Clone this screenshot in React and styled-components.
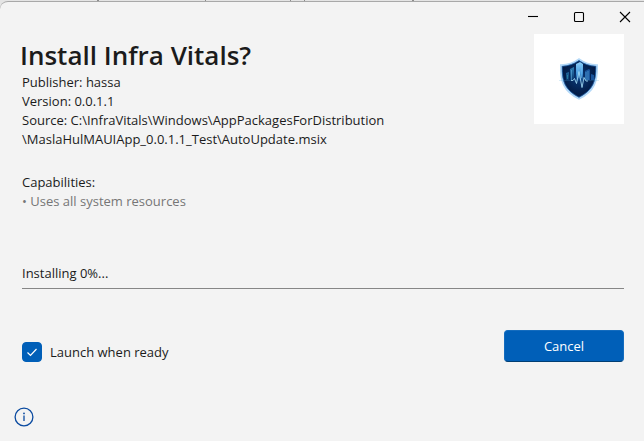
import React from 'react';
import styled, { createGlobalStyle } from 'styled-components';

const COLORS = {
  window: '#f3f3f3',
  frame: '#a8a8a8',
  backdrop: '#e4e4e4',
  backdropEdge: '#8c8c8c',
  text: '#1b1b1b',
  muted: '#767676',
  track: '#868686',
  accent: '#005fb8',
  accentDark: '#003e73',
  info: '#0a4aa0',
};

const App = () => {
  return (
    <>
      <GlobalStyle />
      <Backdrop>
        <Window>
          <TitleBar>
            <CaptionButton aria-label="Minimize">
              <CaptionIcon viewBox="0 0 12 12">
                <path d="M1 5.5h10" />
              </CaptionIcon>
            </CaptionButton>
            <CaptionButton aria-label="Maximize">
              <CaptionIcon viewBox="0 0 12 12">
                <rect x="1.5" y="1.5" width="9" height="9" rx="1" />
              </CaptionIcon>
            </CaptionButton>
            <CaptionButton aria-label="Close">
              <CaptionIcon viewBox="0 0 12 12">
                <path d="M1 1l10 10M11 1L1 11" />
              </CaptionIcon>
            </CaptionButton>
          </TitleBar>

          <Header>
            <Summary>
              <Title>Install Infra Vitals?</Title>
              <Line>Publisher: hassa</Line>
              <Line>Version: 0.0.1.1</Line>
              <Line>
                Source: C:\InfraVitals\Windows\AppPackagesForDistribution
                <wbr />
                \MaslaHulMAUIApp_0.0.1.1_Test\AutoUpdate.msix
              </Line>
            </Summary>
            <LogoTile>
              <ShieldLogo />
            </LogoTile>
          </Header>

          <Capabilities>
            <Line>Capabilities:</Line>
            <Line $muted>• Uses all system resources</Line>
          </Capabilities>

          <Progress>
            <Line id="status">Installing 0%...</Line>
            <Track role="progressbar" aria-labelledby="status" aria-valuenow={0} />
          </Progress>

          <Actions>
            <CheckLabel>
              <Checkbox type="checkbox" defaultChecked />
              <CheckMark viewBox="0 0 20 20">
                <path d="M5.5 10.5l3 3 6-6.500" />
              </CheckMark>
              Launch when ready
            </CheckLabel>
            <CancelButton>Cancel</CancelButton>
          </Actions>

          <Footer>
            <InfoButton aria-label="About this installer">
              <svg width="20" height="20" viewBox="0 0 20 20" fill="none">
                <circle cx="10" cy="10" r="8.9" stroke="currentColor" strokeWidth="1.3" />
                <circle cx="10" cy="6.4" r="0.9" fill="currentColor" />
                <path d="M10 8.600v5.400" stroke="currentColor" strokeWidth="1.3" />
              </svg>
            </InfoButton>
          </Footer>
        </Window>
      </Backdrop>
    </>
  );
};

const ShieldLogo = () => (
  <svg width="40" height="42" viewBox="0 0 40 42" fill="none">
    <defs>
      <radialGradient id="shield" cx="0.5" cy="0.45" r="0.6">
        <stop offset="0" stopColor="#0b3c7c" />
        <stop offset="0.6" stopColor="#04214f" />
        <stop offset="1" stopColor="#02143a" />
      </radialGradient>
      <linearGradient id="tower" x1="0" y1="0" x2="0" y2="1">
        <stop offset="0" stopColor="#8ed0fb" />
        <stop offset="0.6" stopColor="#4596db" />
        <stop offset="1" stopColor="#0a3b7a" />
      </linearGradient>
      <linearGradient id="side" x1="0" y1="0" x2="0" y2="1">
        <stop offset="0" stopColor="#2f7fb6" />
        <stop offset="1" stopColor="#0b3a70" />
      </linearGradient>
    </defs>
    <path
      d="M20 1.200C15 4.800 9 6.900 2 7.300C1.600 23 4.500 33 20 40.600C35.500 33 38.400 23 38 7.300C31 6.900 25 4.800 20 1.200Z"
      fill="url(#shield)"
      stroke="#b4d9f8"
      strokeWidth="2"
    />
    <path
      d="M20 2.600C15 6 9.400 7.900 3.200 8.300C3 23 5.800 32 20 39.200C34.200 32 37 23 36.800 8.300C30.600 7.900 25 6 20 2.600Z"
      stroke="#2568b2"
      strokeWidth="0.8"
    />
    <path d="M7 15l3-1v8H7zM11 11l4-2v13h-4z" fill="url(#side)" />
    <path d="M17 6l4-2 3 2v17h-7z" fill="url(#tower)" />
    <path d="M26 13l4-2 1 1v10h-5zM32 16l3 1v5h-3z" fill="#1a559c" />
    <path d="M27 14v8M29 13v9M12.500 12v10M19 8v12M22.500 6v14" stroke="#6cc0f0" strokeWidth="0.5" />
    <path d="M8 18h1M8 20h1" stroke="#4edcdc" strokeWidth="0.7" />
    <path
      d="M0 22.500h14l1.500-2 2 5 2.500-12 3 16 2-10 2 3.500L29 22.500h11"
      stroke="#4aa6dc"
      strokeOpacity="0.35"
      strokeWidth="0.6"
    />
    <path
      d="M12 22.500h2l1.500-2 2 5 2.500-12 3 16 2-10 2 3.500h2"
      stroke="#a9def6"
      strokeWidth="0.8"
      strokeLinejoin="round"
    />
  </svg>
);

const GlobalStyle = createGlobalStyle`
  *, *::before, *::after {
    box-sizing: border-box;
  }

  body {
    margin: 0;
    color: ${COLORS.text};
    font-family: 'Open Sans', 'Noto Sans', sans-serif;
    font-size: 13px;
    line-height: 19px;
  }

  button {
    padding: 0;
    border: 0;
    background: none;
    color: inherit;
    font: inherit;
  }
`;

// the sliver of the window behind shows its column edges
const Backdrop = styled.div`
  display: flex;
  flex-direction: column;
  min-height: 100vh;
  padding-top: 1px;
  background: linear-gradient(
    to right,
    transparent 97px,
    ${COLORS.backdropEdge} 97px 99px,
    transparent 99px 205px,
    ${COLORS.backdropEdge} 205px 206px,
    transparent 206px 290px,
    ${COLORS.backdropEdge} 290px 291px,
    transparent 291px 304px,
    ${COLORS.backdropEdge} 304px 305px,
    transparent 305px 412px,
    ${COLORS.backdropEdge} 412px 414px,
    transparent 414px
  ), ${COLORS.backdrop};
`;

const Window = styled.main`
  flex: 1;
  display: flex;
  flex-direction: column;
  border-top: 1px solid ${COLORS.frame};
  border-radius: 8px 0 0 0;
  background: ${COLORS.window};
`;

const TitleBar = styled.div`
  display: flex;
  justify-content: flex-end;
  height: 32px;
`;

const CaptionButton = styled.button`
  display: grid;
  place-items: center;
  width: 46px;
  height: 30px;

  &:last-child {
    margin-right: -4px;
  }
`;

const CaptionIcon = styled.svg`
  width: 12px;
  height: 12px;
  fill: none;
  stroke: #000;
  stroke-width: 1.1;
`;

const Header = styled.header`
  display: flex;
  justify-content: space-between;
  padding: 0 20px 0 22px;
`;

const Summary = styled.div`
  flex: 1;
  min-width: 0;
`;

const Title = styled.h1`
  margin: 0 0 0 -2px;
  padding-top: 3px;
  font-size: 26px;
  font-weight: 600;
  line-height: 36px;
`;

const Line = styled.p`
  margin: 0;
  color: ${props => (props.$muted ? COLORS.muted : COLORS.text)};
`;

const LogoTile = styled.div`
  display: grid;
  place-items: center;
  width: 90px;
  height: 90px;
  background: #fff;
`;

const Capabilities = styled.section`
  padding: 24px 20px 0 22px;
`;

const Progress = styled.section`
  padding: 53px 20px 0 22px;
`;

const Track = styled.div`
  height: 1px;
  margin-top: 5px;
  background: ${COLORS.track};
`;

const Actions = styled.div`
  display: flex;
  justify-content: space-between;
  padding: 41px 20px 0 22px;
`;

const CheckLabel = styled.label`
  display: grid;
  grid-template-columns: 20px auto;
  align-items: center;
  align-self: flex-end;
  column-gap: 8px;
`;

const Checkbox = styled.input`
  grid-area: 1 / 1;
  appearance: none;
  width: 20px;
  height: 20px;
  margin: 0;
  border: 1px solid ${COLORS.track};
  border-radius: 4px;

  &:checked {
    border-color: ${COLORS.accent};
    background: ${COLORS.accent};
  }
`;

const CheckMark = styled.svg`
  grid-area: 1 / 1;
  width: 20px;
  height: 20px;
  fill: none;
  stroke: #fff;
  stroke-width: 1.2;
  pointer-events: none;
`;

const CancelButton = styled.button`
  width: 120px;
  height: 32px;
  border: 1px solid #146cbe;
  border-bottom-color: ${COLORS.accentDark};
  border-radius: 4px;
  background: ${COLORS.accent};
  color: #fff;
`;

const Footer = styled.footer`
  margin-top: auto;
  padding: 0 14px 14px;
`;

const InfoButton = styled.button`
  display: block;
  width: 20px;
  height: 20px;
  color: ${COLORS.info};
`;

export default App;
